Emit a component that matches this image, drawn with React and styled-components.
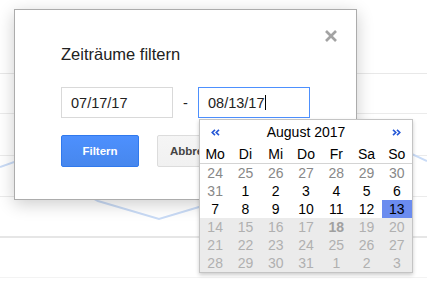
import React from 'react'
import styled, { createGlobalStyle } from 'styled-components'

const GlobalStyle = createGlobalStyle`
  html, body {
    margin: 0;
    padding: 0;
    background: #fff;
  }
  body {
    font-family: "Liberation Sans", Arial, sans-serif;
    color: #222;
  }
`

const Page = styled.div`
  position: relative;
  width: 427px;
  height: 288px;
  overflow: hidden;
  background: #fff;
`

// report behind the modal: ruled rows with a faint line chart
const Report = styled.div`
  display: flex;
  flex-direction: column;
`

const ReportRow = styled.div`
  height: ${p => p.$h}px;
  border-bottom: ${p => (p.$thick ? 2 : 1)}px solid ${p => p.$line || '#ebebeb'};
`

const ChartLayer = styled.svg`
  position: absolute;
  left: 0;
  top: 0;
  pointer-events: none;
`

const Dialog = styled.div`
  position: absolute;
  left: 14px;
  top: 9px;
  width: 343px;
  height: 191px;
  box-sizing: border-box;
  padding: 34px 46px 0;
  background: #fff;
  border: 1px solid #acacac;
  box-shadow: 0 4px 16px rgba(0, 0, 0, 0.2);
  z-index: 1;
`

const CloseButton = styled.div`
  position: absolute;
  top: 20px;
  right: 19px;
  width: 12px;
  height: 12px;
  display: flex;
`

const Title = styled.h2`
  margin: 0;
  font-size: 16.5px;
  line-height: 20px;
  font-weight: normal;
  color: #222;
`

const FieldRow = styled.div`
  display: flex;
  align-items: center;
  margin-top: 23px;
  height: 31px;
`

const DatePicker = styled.div`
  position: relative;
`

const DateField = styled.div`
  width: 112px;
  height: 31px;
  box-sizing: border-box;
  display: flex;
  align-items: center;
  padding: 0 9px;
  border: 1px solid ${p => (p.$focused ? '#4d90fe' : '#d9d9d9')};
  font-size: 14.5px;
  color: #222;
`

const Caret = styled.span`
  display: inline-block;
  width: 1px;
  height: 15px;
  margin-left: 1px;
  background: #000;
`

const Dash = styled.span`
  width: 25px;
  text-align: center;
  font-size: 14.5px;
  color: #222;
`

const ButtonRow = styled.div`
  display: flex;
  gap: 18px;
  margin-top: 17px;
`

const Button = styled.div`
  height: 32px;
  box-sizing: border-box;
  display: flex;
  align-items: center;
  justify-content: center;
  border-radius: 2px;
  font-size: 11.5px;
  font-weight: bold;
  ${p => p.$primary ? `
    width: 78px;
    color: #fff;
    border: 1px solid #3079ed;
    background: linear-gradient(#4d90fe, #4787ed);
  ` : `
    padding: 0 12px;
    color: #444;
    border: 1px solid #dcdcdc;
    background: linear-gradient(#f5f5f5, #f1f1f1);
  `}
`

const Calendar = styled.div`
  position: absolute;
  left: 1px;
  top: 32px;
  width: 214px;
  box-sizing: border-box;
  background: #fff;
  border: 1px solid #c4c4c4;
  box-shadow: 0 2px 4px rgba(0, 0, 0, 0.2);
  font-size: 14px;
  color: #000;
  z-index: 2;
`

const CalHeader = styled.div`
  display: flex;
  align-items: center;
  justify-content: space-between;
  padding: 3px 11px 4px;
  line-height: 18px;
`

const NavArrow = styled.svg`
  display: block;
`

const Grid = styled.div`
  display: grid;
  grid-template-columns: repeat(7, 1fr);
  grid-auto-rows: 18px;
  line-height: 18px;
  text-align: center;
`

const WeekdayRow = styled(Grid)`
  border-bottom: 1px solid #d4d4d4;
`

const DayCell = styled.div`
  color: ${p => ({ other: '#888', normal: '#000', selected: '#000', disabled: '#b0b0b0' }[p.$kind])};
  background: ${p => ({ other: '#fff', normal: '#fff', selected: '#6b8cef', disabled: '#ebebeb' }[p.$kind])};
  font-weight: ${p => (p.$today ? 'bold' : 'normal')};
  ${p => p.$today && 'color: #a0a0a0;'}
`

const weekdays = ['Mo', 'Di', 'Mi', 'Do', 'Fr', 'Sa', 'So']

const days = [
  ...[24, 25, 26, 27, 28, 29, 30, 31].map(d => ({ d, kind: 'other' })),
  ...[1, 2, 3, 4, 5, 6, 7, 8, 9, 10, 11, 12].map(d => ({ d, kind: 'normal' })),
  { d: 13, kind: 'selected' },
  ...[14, 15, 16, 17, 18, 19, 20, 21, 22, 23, 24, 25, 26, 27, 28, 29, 30, 31, 1, 2, 3].map(d => ({
    d,
    kind: 'disabled',
  })),
]

const Chevrons = ({ dir }) => (
  <NavArrow width="9" height="7" viewBox="0 0 9 7">
    <g fill="none" stroke="#2457d6" strokeWidth="1.6">
      {dir === 'left' ? (
        <>
          <polyline points="4,0.8 1.2,3.5 4,6.2" />
          <polyline points="8,0.8 5.2,3.5 8,6.2" />
        </>
      ) : (
        <>
          <polyline points="1,0.8 3.8,3.5 1,6.2" />
          <polyline points="5,0.8 7.8,3.5 5,6.2" />
        </>
      )}
    </g>
  </NavArrow>
)

export default function App() {
  return (
    <Page>
      <GlobalStyle />
      <Report>
        <ReportRow $h={73} $line="#e8e8e8" />
        <ReportRow $h={39} />
        <ReportRow $h={41} />
        <ReportRow $h={40} />
        <ReportRow $h={39} $thick $line="#e6e6e6" />
        <ReportRow $h={39} $line="#f3f3f3" />
      </Report>
      <ChartLayer width="427" height="288" viewBox="0 0 427 288">
        <polyline
          points="0,167 14,162 60,180 98,201 159,219 199,207 300,178 412,154 427,161"
          fill="none"
          stroke="#c9dbf6"
          strokeWidth="2"
        />
      </ChartLayer>

      <Dialog>
        <CloseButton>
          <svg width="12" height="12" viewBox="0 0 12 12">
            <g stroke="#a3a3a3" strokeWidth="2.6">
              <line x1="1" y1="1" x2="11" y2="11" />
              <line x1="11" y1="1" x2="1" y2="11" />
            </g>
          </svg>
        </CloseButton>
        <Title>Zeiträume filtern</Title>
        <FieldRow>
          <DateField>07/17/17</DateField>
          <Dash>-</Dash>
          <DatePicker>
            <DateField $focused>
              08/13/17
              <Caret />
            </DateField>
            <Calendar>
              <CalHeader>
                <Chevrons dir="left" />
                <span>August 2017</span>
                <Chevrons dir="right" />
              </CalHeader>
              <WeekdayRow>
                {weekdays.map(w => (
                  <div key={w}>{w}</div>
                ))}
              </WeekdayRow>
              <Grid>
                {days.map((day, i) => (
                  <DayCell key={i} $kind={day.kind} $today={day.kind === 'disabled' && day.d === 18 && i < 28}>
                    {day.d}
                  </DayCell>
                ))}
              </Grid>
            </Calendar>
          </DatePicker>
        </FieldRow>
        <ButtonRow>
          <Button $primary>Filtern</Button>
          <Button>Abbrechen</Button>
        </ButtonRow>
      </Dialog>
    </Page>
  )
}
